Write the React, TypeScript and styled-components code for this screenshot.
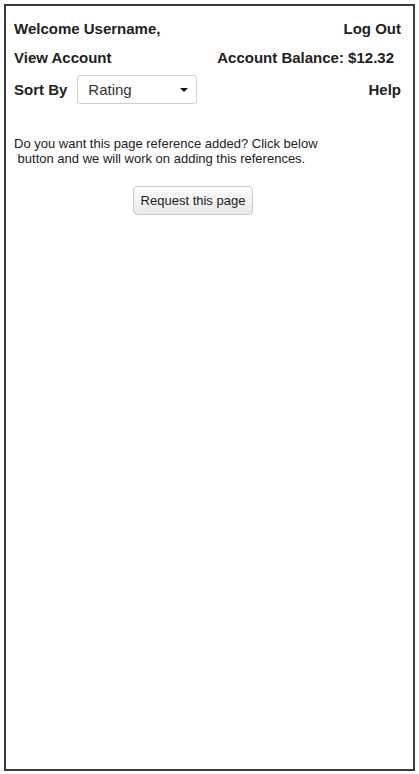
import React from "react";
import styled, { createGlobalStyle } from "styled-components";

const Global = createGlobalStyle`
  html, body { margin: 0; padding: 0; background: #fff; }
  body { padding: 4px 4px 3px 4px; font-family: "Liberation Sans", Arial, sans-serif; color: #222; }
  * { box-sizing: border-box; }
`;

const Frame = styled.div`
  border: 2px solid #3a3a3a;
  height: 767px;
  padding: 13px 12px 0 8px;
  background: #fff;
`;

const Row = styled.div<{ $h: number; $mt: number }>`
  display: flex;
  align-items: center;
  justify-content: space-between;
  height: ${(p) => p.$h}px;
  margin-top: ${(p) => p.$mt}px;
`;

const Label = styled.span<{ $inset?: number }>`
  font-size: 15px;
  font-weight: bold;
  color: #222;
  margin-right: ${(p) => p.$inset ?? 0}px;
`;

const SortGroup = styled.div`
  display: flex;
  align-items: center;
  gap: 10px;
`;

const Select = styled.div`
  width: 120px;
  height: 29px;
  border: 1px solid #cfcfcf;
  border-radius: 3px;
  display: flex;
  align-items: center;
  justify-content: space-between;
  padding: 0 8px 0 10px;
  font-size: 15px;
  color: #333;
  background: #fff;
`;

const Caret = styled.span`
  width: 0;
  height: 0;
  border-left: 4px solid transparent;
  border-right: 4px solid transparent;
  border-top: 4px solid #111;
`;

const Message = styled.p`
  margin: 32px 0 0 0;
  font-size: 13px;
  line-height: 15px;
  color: #222;
  white-space: pre;
`;

const ButtonRow = styled.div`
  display: flex;
  padding-left: 119px;
  margin-top: 20px;
`;

const Button = styled.button`
  width: 120px;
  height: 29px;
  border: 1px solid #cacaca;
  border-radius: 4px;
  background: linear-gradient(#fdfdfd, #e9e9e9);
  font-family: "Liberation Sans", Arial, sans-serif;
  font-size: 13px;
  color: #1a1a1a;
  padding: 0;
`;

export default function App() {
  return (
    <>
      <Global />
      <Frame>
        <Row $h={18} $mt={0}>
          <Label>Welcome Username,</Label>
          <Label>Log Out</Label>
        </Row>
        <Row $h={18} $mt={11}>
          <Label>View Account</Label>
          <Label $inset={7}>Account Balance: $12.32</Label>
        </Row>
        <Row $h={29} $mt={9}>
          <SortGroup>
            <Label>Sort By</Label>
            <Select>
              <span>Rating</span>
              <Caret />
            </Select>
          </SortGroup>
          <Label>Help</Label>
        </Row>
        <Message>{"Do you want this page reference added? Click below\n button and we will work on adding this references."}</Message>
        <ButtonRow>
          <Button>Request this page</Button>
        </ButtonRow>
      </Frame>
    </>
  );
}
